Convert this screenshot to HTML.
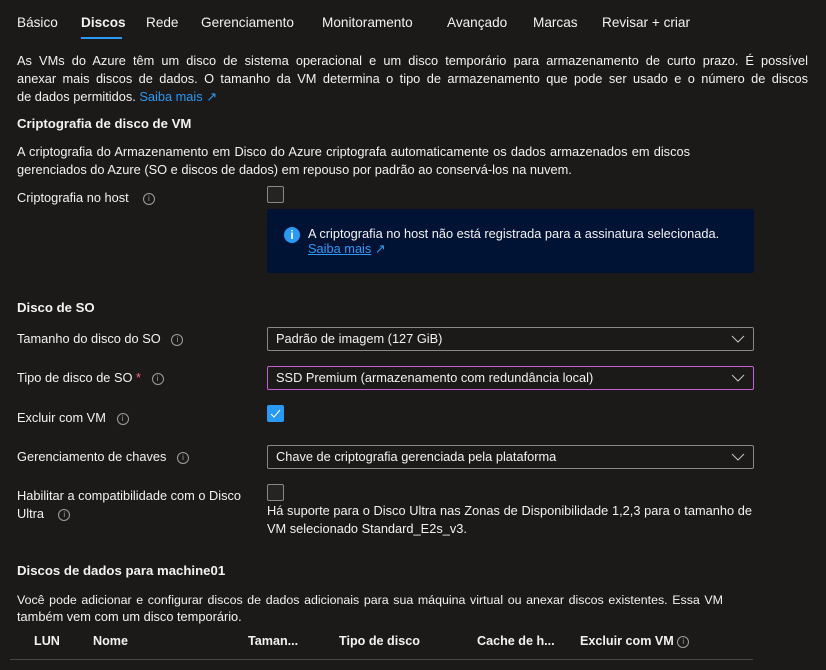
<!DOCTYPE html>
<html><head><meta charset="utf-8"><style>
body{margin:0;width:826px;height:670px;background:#1b1a19;color:#f3f2f1;font-family:"Liberation Sans",sans-serif;font-size:12.8px;position:relative;overflow:hidden}
.a{position:absolute;white-space:nowrap;line-height:18px}
.j{white-space:normal;text-align:justify;text-align-last:justify;height:18px;overflow:hidden}
.tab{position:absolute;top:14px;font-size:13.6px;line-height:18px;color:#f3f2f1}
.b{font-weight:bold;font-size:13.2px}
.i{display:inline-block;width:10px;height:10px;border:1px solid #a19f9d;border-radius:50%;font-size:8px;line-height:10px;text-align:center;color:#a19f9d;vertical-align:1px;font-weight:normal}
.cb{position:absolute;left:267px;width:17px;height:17px;border:1px solid #8a8886;border-radius:2px;background:#252423;box-sizing:border-box}
.dd{position:absolute;left:267px;width:487px;height:24px;border:1px solid #8a8886;border-radius:2px;box-sizing:border-box;padding-left:8px;line-height:22px;white-space:nowrap}
.dd svg{position:absolute;right:8px;top:7px}
a{color:#2899f5;text-decoration:none}
</style></head><body>
<div class="tab" style="left:17px">Básico</div>
<div class="tab" style="left:81px;font-weight:bold">Discos</div>
<div style="position:absolute;left:81px;top:37px;width:41px;height:2px;background:#2899f5"></div>
<div class="tab" style="left:146px">Rede</div>
<div class="tab" style="left:201px">Gerenciamento</div>
<div class="tab" style="left:322px">Monitoramento</div>
<div class="tab" style="left:447px">Avançado</div>
<div class="tab" style="left:533px">Marcas</div>
<div class="tab" style="left:602px">Revisar + criar</div>

<div class="a j" style="left:17px;top:52px;width:791px">As VMs do Azure têm um disco de sistema operacional e um disco temporário para armazenamento de curto prazo. É possível</div>
<div class="a j" style="left:17px;top:70px;width:791px">anexar mais discos de dados. O tamanho da VM determina o tipo de armazenamento que pode ser usado e o número de discos</div>
<div class="a" style="left:17px;top:88px">de dados permitidos. <a>Saiba mais ↗</a></div>

<div class="a b" style="left:17px;top:115px">Criptografia de disco de VM</div>
<div class="a j" style="left:17px;top:143px;width:673px">A criptografia do Armazenamento em Disco do Azure criptografa automaticamente os dados armazenados em discos</div>
<div class="a" style="left:17px;top:161px">gerenciados do Azure (SO e discos de dados) em repouso por padrão ao conservá-los na nuvem.</div>

<div class="a" style="left:17px;top:189px">Criptografia no host &nbsp; &nbsp;<span class="i">i</span></div>
<div class="cb" style="top:186px"></div>
<div style="position:absolute;left:267px;top:209px;width:487px;height:64px;background:#001335;border-radius:2px"></div>
<div style="position:absolute;left:284px;top:227px;width:16px;height:16px;border-radius:50%;background:#2899f5;color:#fff;font-weight:bold;font-size:12px;line-height:16px;text-align:center">i</div>
<div class="a" style="left:308px;top:225px">A criptografia no host não está registrada para a assinatura selecionada.</div>
<div class="a" style="left:308px;top:240px"><a style="text-decoration:underline">Saiba mais</a> <a>↗</a></div>

<div class="a b" style="left:17px;top:299px">Disco de SO</div>
<div class="a" style="left:17px;top:330px">Tamanho do disco do SO &nbsp; <span class="i">i</span></div>
<div class="dd" style="top:327px">Padrão de imagem (127 GiB)<svg width="14" height="8"><path d="M1 1l6 6 6-6" stroke="#c8c6c4" fill="none"/></svg></div>
<div class="a" style="left:17px;top:369px">Tipo de disco de SO <span style="color:#f1707b">*</span> &nbsp; <span class="i">i</span></div>
<div class="dd" style="top:366px;border-color:#c55fd6">SSD Premium (armazenamento com redundância local)<svg width="14" height="8"><path d="M1 1l6 6 6-6" stroke="#c8c6c4" fill="none"/></svg></div>
<div class="a" style="left:17px;top:409px">Excluir com VM &nbsp; <span class="i">i</span></div>
<div class="cb" style="top:405px;background:#2899f5;border-color:#2899f5"><svg width="17" height="17" style="position:absolute;left:-1px;top:-1px"><path d="M4 9l3 3 6-7" stroke="#fff" fill="none" stroke-width="1"/></svg></div>
<div class="a" style="left:17px;top:448px">Gerenciamento de chaves &nbsp; <span class="i">i</span></div>
<div class="dd" style="top:445px">Chave de criptografia gerenciada pela plataforma<svg width="14" height="8"><path d="M1 1l6 6 6-6" stroke="#c8c6c4" fill="none"/></svg></div>
<div class="a" style="left:17px;top:487px">Habilitar a compatibilidade com o Disco</div>
<div class="a" style="left:17px;top:505px">Ultra &nbsp; &nbsp;<span class="i">i</span></div>
<div class="cb" style="top:484px"></div>
<div class="a j" style="left:267px;top:502px;width:485px">Há suporte para o Disco Ultra nas Zonas de Disponibilidade 1,2,3 para o tamanho de</div>
<div class="a" style="left:267px;top:520px">VM selecionado Standard_E2s_v3.</div>

<div class="a b" style="left:17px;top:562px">Discos de dados para machine01</div>
<div class="a j" style="left:17px;top:591px;width:706px;font-size:12.4px">Você pode adicionar e configurar discos de dados adicionais para sua máquina virtual ou anexar discos existentes. Essa VM</div>
<div class="a" style="left:17px;top:608px">também vem com um disco temporário.</div>
<div class="a b" style="left:34px;top:632px;font-size:12.6px">LUN</div>
<div class="a b" style="left:93px;top:632px;font-size:12.6px">Nome</div>
<div class="a b" style="left:248px;top:632px;font-size:12.6px">Taman...</div>
<div class="a b" style="left:339px;top:632px;font-size:12.6px">Tipo de disco</div>
<div class="a b" style="left:477px;top:632px;font-size:12.6px">Cache de h...</div>
<div class="a b" style="left:580px;top:632px;font-size:12.6px">Excluir com VM <span class="i">i</span></div>
<div style="position:absolute;left:10px;top:659px;width:743px;height:1px;background:#484644"></div>
</body></html>
